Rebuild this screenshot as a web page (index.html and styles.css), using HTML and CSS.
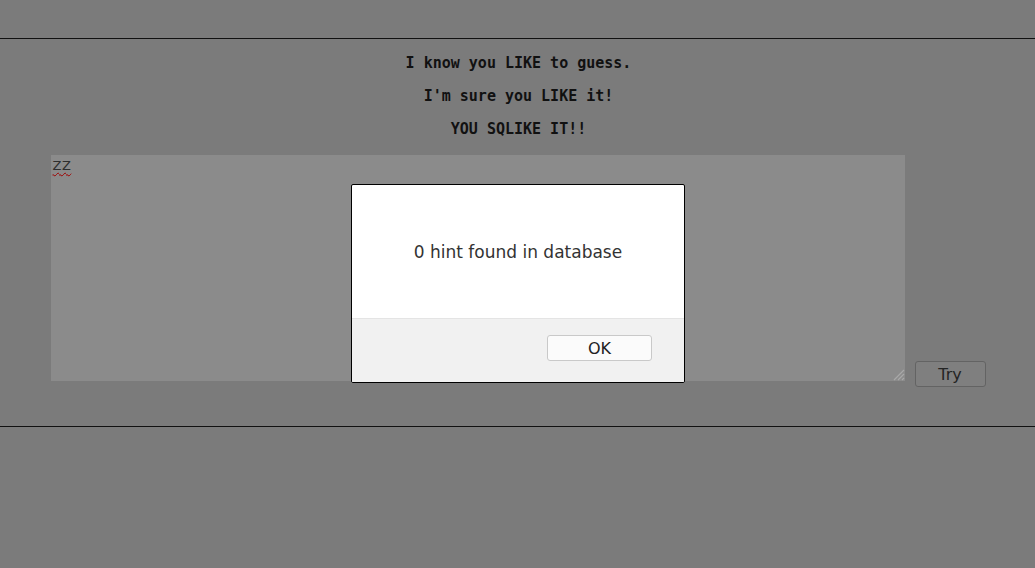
FILE: index.html
```html
<!DOCTYPE html>
<html>
<head>
<meta charset="utf-8">
<link rel="stylesheet" href="styles.css">
</head>
<body>
<div class="top"></div>
<hr class="rule">
<main class="content">
  <div class="lines">
    <div class="line">I know you LIKE to guess.</div>
    <div class="line">I'm sure you LIKE it!</div>
    <div class="line">YOU SQLIKE IT!!</div>
  </div>
  <form class="form">
    <div class="area">
      <span class="typed">ZZ</span>
      <svg class="grip" width="14" height="14" viewBox="0 0 14 14">
        <path d="M13 3 L3 13 M13 7 L7 13 M13 11 L11 13" stroke="#a8a8a8" stroke-width="1.2" fill="none"/>
      </svg>
    </div>
    <button type="button" class="try">Try</button>
  </form>
</main>
<hr class="rule">

<div class="dialog">
  <div class="dialog-body">0 hint found in database</div>
  <div class="dialog-foot">
    <button type="button" class="ok">OK</button>
  </div>
</div>
</body>
</html>
```

FILE: styles.css
```css
html, body {
  margin: 0;
  padding: 0;
  background: #7b7b7b;
  height: 100%;
}
body {
  position: relative;
  font-family: "DejaVu Sans", sans-serif;
}
.top {
  height: 38px;
}
.rule {
  margin: 0;
  border: 0;
  border-top: 1px solid #111;
  height: 0;
}
.content {
  padding: 15px 0 45px;
}
.lines {
  display: flex;
  flex-direction: column;
  align-items: center;
  gap: 15px;
  padding-left: 2px;
}
.line {
  font-family: "DejaVu Sans Mono", monospace;
  font-weight: bold;
  font-size: 15px;
  line-height: 18px;
  color: #111;
}
.form {
  margin: 17px 0 0;
  padding-left: 1px;
  display: flex;
  justify-content: center;
  align-items: flex-end;
  gap: 10px;
}
.area {
  position: relative;
  width: 854px;
  height: 226px;
  background: #8b8b8b;
  box-sizing: border-box;
  padding: 3px 2px;
  font-size: 13px;
  line-height: 16px;
  color: #2e2e2e;
  letter-spacing: 0.5px;
}
.typed {
  text-decoration: underline wavy #a00000;
  text-decoration-thickness: 1px;
  text-underline-offset: 2px;
}
.grip {
  position: absolute;
  right: 0;
  bottom: 0;
}
.try {
  width: 71px;
  height: 26px;
  margin-bottom: -6px;
  border: 1px solid #636363;
  border-radius: 3px;
  background: #7f7f7f;
  font-family: "DejaVu Sans", sans-serif;
  font-size: 16px;
  color: #242424;
  padding: 0;
}
.dialog {
  position: absolute;
  left: 351px;
  top: 184px;
  width: 334px;
  height: 199px;
  box-sizing: border-box;
  border: 1px solid #000;
  border-radius: 2px;
  background: #fff;
  display: flex;
  flex-direction: column;
  overflow: hidden;
}
.dialog-body {
  height: 134px;
  display: flex;
  align-items: center;
  justify-content: center;
  font-size: 17px;
  color: #333;
  border-bottom: 1px solid #e4e4e4;
  box-sizing: border-box;
}
.dialog-foot {
  flex: 1;
  background: #f1f1f1;
  display: flex;
  justify-content: flex-end;
  align-items: flex-start;
  padding: 16px 32px 0 0;
}
.ok {
  width: 105px;
  height: 26px;
  border: 1px solid #c9c9c9;
  border-radius: 3px;
  background: #fbfbfb;
  font-family: "DejaVu Sans", sans-serif;
  font-size: 16px;
  color: #222;
  padding: 0;
}
```
